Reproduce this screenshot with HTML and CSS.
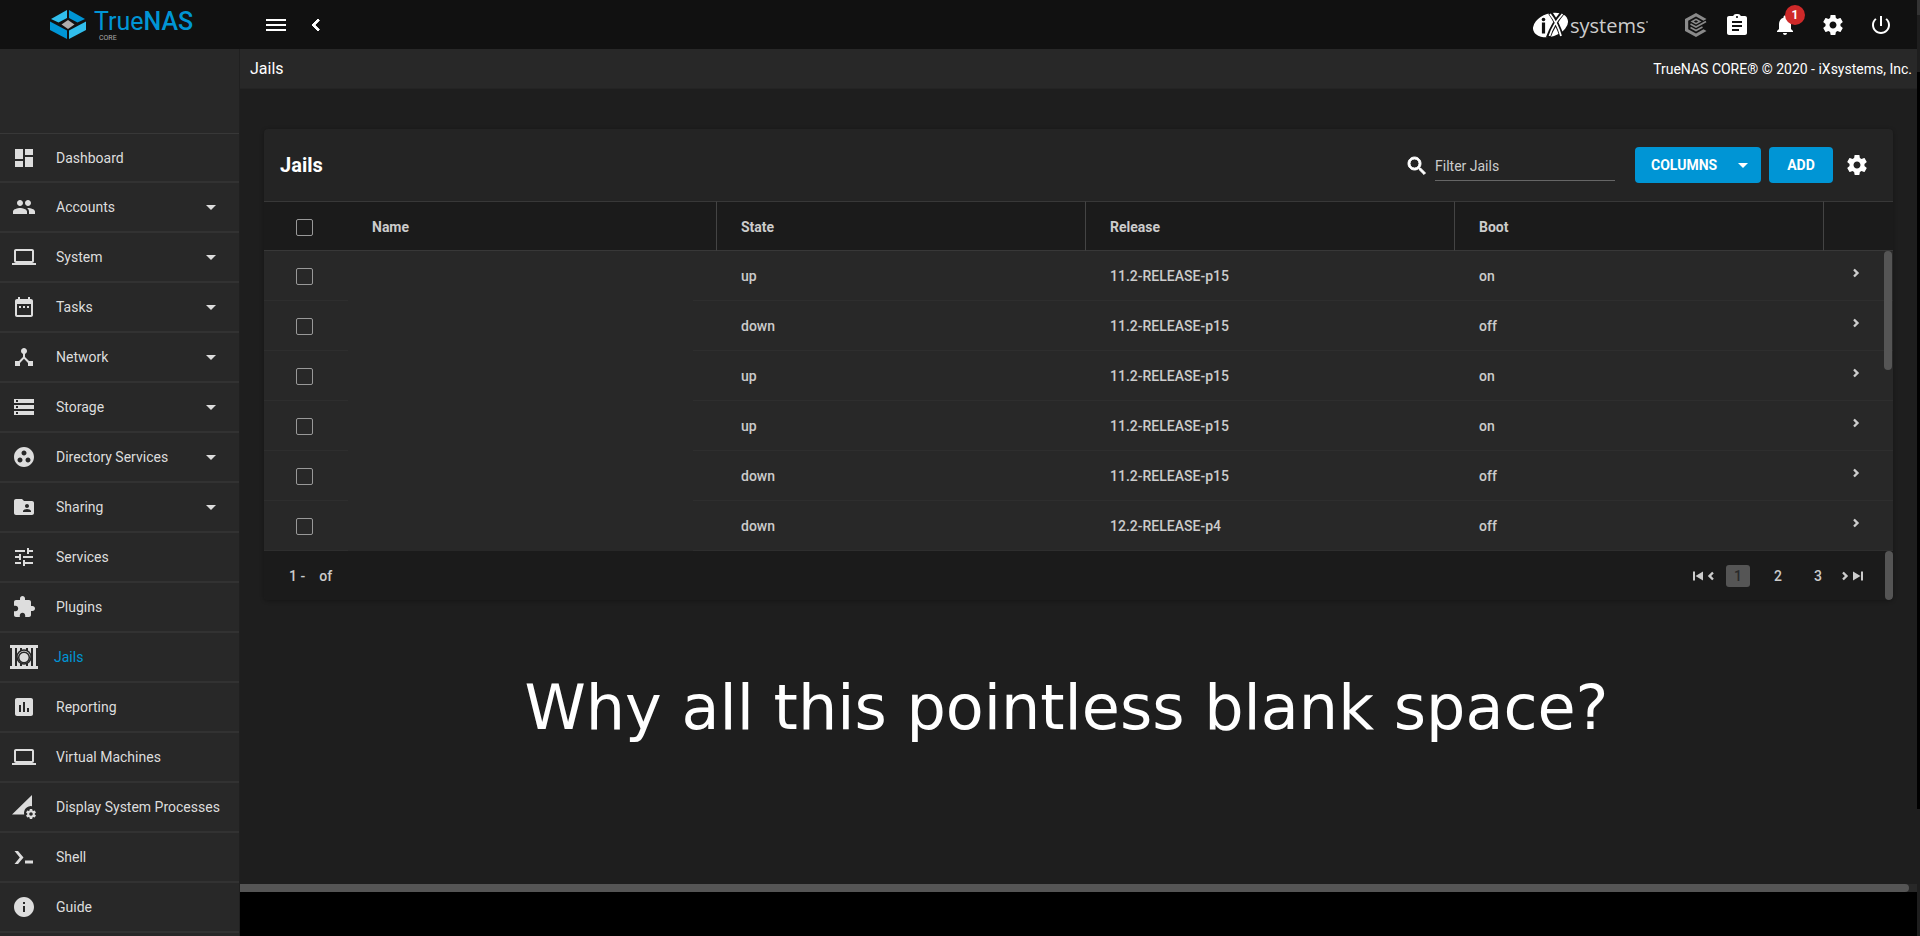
FILE: index.html
```html
<!DOCTYPE html>
<html lang="en">
<head>
    <meta charset="UTF-8">
    <meta name="viewport" content="width=device-width, initial-scale=1.0">
    <title>TrueNAS - Jails</title>
    <link rel="stylesheet" href="styles.css">
</head>
<body>
    <!-- shared icons -->
    <svg class="sprite" aria-hidden="true">
        <symbol id="gear" viewBox="0 0 24 24"><path d="M19.43 12.98c.04-.32.07-.64.07-.98s-.03-.66-.07-.98l2.11-1.65c.19-.15.24-.42.12-.64l-2-3.46c-.12-.22-.39-.3-.61-.22l-2.49 1c-.52-.4-1.08-.73-1.69-.98l-.38-2.65C14.46 2.18 14.25 2 14 2h-4c-.25 0-.46.18-.49.42l-.38 2.65c-.61.25-1.17.59-1.69.98l-2.49-1c-.23-.09-.49 0-.61.22l-2 3.46c-.13.22-.07.49.12.64l2.11 1.65c-.04.32-.07.65-.07.98s.03.66.07.98l-2.11 1.65c-.19.15-.24.42-.12.64l2 3.46c.12.22.39.3.61.22l2.49-1c.52.4 1.08.73 1.69.98l.38 2.65c.03.24.24.42.49.42h4c.25 0 .46-.18.49-.42l.38-2.65c.61-.25 1.17-.59 1.69-.98l2.49 1c.23.09.49 0 .61-.22l2-3.46c.12-.22.07-.49-.12-.64l-2.11-1.65zM12 15.5c-1.93 0-3.5-1.57-3.5-3.5s1.57-3.5 3.5-3.5 3.500 1.57 3.500 3.500-1.57 3.500-3.500 3.500z"/></symbol>
        <symbol id="laptop" viewBox="0 0 24 24"><path d="M20 18c1.1 0 1.990-.9 1.990-2L22 6c0-1.1-.9-2-2-2H4c-1.1 0-2 .9-2 2v10c0 1.1.9 2 2 2H0v2h24v-2h-4zM4 6h16v10H4V6z"/></symbol>
        <symbol id="drop" viewBox="0 0 24 24"><path d="M7 10l5 5 5-5z"/></symbol>
        <symbol id="left" viewBox="0 0 24 24"><path d="M15.410 7.410L14 6l-6 6 6 6 1.410-1.410L10.830 12z"/></symbol>
        <symbol id="right" viewBox="0 0 24 24"><path d="M10 6L8.590 7.410 13.170 12l-4.580 4.590L10 18l6-6z"/></symbol>
    </svg>

    <div class="app">
        <header class="topbar">
            <a class="brand" href="#">
                <svg class="brand-mark" viewBox="0 0 36 30">
                    <path fill="#31beec" d="M17 0v8L8.500 12.500 1 9z"/>
                    <path fill="#0095d5" d="M19 0v8l8.500 4.500L35 9z"/>
                    <path fill="#0095d5" d="M0 11.500l17 9V29L0 20z"/>
                    <path fill="#31beec" d="M36 11.500l-17 9V29l17-9z"/>
                    <path fill="#aeaeae" d="M18 10l6.500 4.500L18 19l-6.500-4.500z"/>
                </svg>
                <span class="brand-text">
                    <span class="brand-name">True<b>NAS</b></span>
                    <span class="brand-edition">CORE</span>
                </span>
            </a>
            <div class="topbar-left">
                <button class="icon-btn" aria-label="Toggle menu"><svg class="icon" viewBox="0 0 24 24"><path d="M2 18h20v-2H2v2zm0-5h20v-2H2v2zm0-7v2h20V6H2z"/></svg></button>
                <button class="icon-btn" aria-label="Collapse menu"><svg class="icon bold"><use href="#left"/></svg></button>
            </div>
            <div class="topbar-right">
                <a class="ix" href="#" aria-label="iXsystems">
                    <svg viewBox="0 0 116 28">
                        <ellipse cx="17.500" cy="14" rx="18" ry="11.500" transform="rotate(-18 17.500 14)" fill="#fff"/>
                        <path d="M17 1.500C21 7 26 17 29 26M31 0C25 7 19 16 15 27" stroke="#111" stroke-width="4.500" fill="none"/>
                        <path d="M17 3C21 8 26 18 28 25M29.500 3C25 8 19 17 16.500 25" stroke="#fff" stroke-width="1.800" fill="none"/>
                        <path d="M10.500 11.500v11" stroke="#111" stroke-width="3.200"/>
                        <circle cx="10.500" cy="8.500" r="1.800" fill="#111"/>
                        <text class="ix-text" x="37" y="22">systems</text>
                        <circle cx="114" cy="11" r="1" fill="#999"/>
                    </svg>
                </a>
                <a class="command" href="#" aria-label="TrueCommand">
                    <svg viewBox="0 0 22 24">
                        <path fill="#8a8a8a" d="M11 0l10.500 6-3 1.700L11 3.500 3.200 7.800v8.400L11 20.500l7.500-4.200 3 1.700L11 24 0 18V6z"/>
                        <path fill="#8a8a8a" d="M11 5.500l5.500 3-5.500 3-5.500-3z"/>
                        <path fill="none" stroke="#8a8a8a" stroke-width="1.600" d="M5.500 11l5.500 3 10-5.500M5.500 14.500l5.500 3 6.500-3.500"/>
                        <path fill="#111" d="M11 7.300l2.200 1.200L11 9.700 8.800 8.500z"/>
                    </svg>
                </a>
                <button class="icon-btn" aria-label="Task manager"><svg class="icon" viewBox="0 0 24 24"><path d="M20 3h-4.180C15.400 1.840 14.300 1 13 1h-2c-1.300 0-2.400.84-2.820 2H4c-1.100 0-2 .9-2 2v15c0 1.100.9 2 2 2h16c1.100 0 2-.9 2-2V5c0-1.100-.9-2-2-2zm-8 0c.55 0 1 .45 1 1s-.45 1-1 1-1-.45-1-1 .45-1 1-1zm2 15H7v-2h7v2zm3-4H7v-2h10v2zm0-4H7V8h10v2z"/></svg></button>
                <button class="icon-btn" aria-label="Notifications">
                    <svg class="icon" viewBox="0 0 24 24"><path d="M12 22c1.100 0 2-.9 2-2h-4c0 1.100.890 2 2 2zm6-6v-5c0-3.070-1.640-5.640-4.500-6.320V4c0-.83-.67-1.500-1.500-1.500s-1.500.67-1.500 1.500v.68C7.630 5.360 6 7.920 6 11v5l-2 2v1h16v-1l-2-2z"/></svg>
                    <span class="badge">1</span>
                </button>
                <button class="icon-btn" aria-label="Settings"><svg class="icon"><use href="#gear"/></svg></button>
                <button class="icon-btn" aria-label="Power"><svg class="icon" viewBox="0 0 24 24"><path d="M13 3h-2v10h2V3zm4.830 2.170l-1.420 1.420C17.990 7.860 19 9.810 19 12c0 3.870-3.130 7-7 7s-7-3.130-7-7c0-2.190 1.010-4.140 2.580-5.420L6.170 5.170C4.230 6.820 3 9.260 3 12c0 4.970 4.030 9 9 9s9-4.030 9-9c0-2.740-1.230-5.180-3.170-6.830z"/></svg></button>
            </div>
        </header>

        <nav class="sidebar">
            <ul class="menu">
                <li><a href="#"><svg class="icon" viewBox="0 0 24 24"><path d="M3 13h8V3H3v10zm0 8h8v-6H3v6zm10 0h8V11h-8v10zm0-18v6h8V3h-8z"/></svg><span>Dashboard</span></a></li>
                <li><a href="#"><svg class="icon" viewBox="0 0 24 24"><path d="M16 11c1.660 0 2.990-1.340 2.990-3S17.660 5 16 5c-1.660 0-3 1.340-3 3s1.340 3 3 3zm-8 0c1.660 0 2.990-1.340 2.990-3S9.660 5 8 5C6.340 5 5 6.340 5 8s1.340 3 3 3zm0 2c-2.330 0-7 1.170-7 3.500V19h14v-2.500c0-2.330-4.670-3.500-7-3.500zm8 0c-.29 0-.62.02-.97.05 1.160.84 1.970 1.970 1.970 3.450V19h6v-2.500c0-2.330-4.670-3.500-7-3.500z"/></svg><span>Accounts</span><svg class="icon caret"><use href="#drop"/></svg></a></li>
                <li><a href="#"><svg class="icon"><use href="#laptop"/></svg><span>System</span><svg class="icon caret"><use href="#drop"/></svg></a></li>
                <li><a href="#"><svg class="icon" viewBox="0 0 24 24"><path d="M9 11H7v2h2v-2zm4 0h-2v2h2v-2zm4 0h-2v2h2v-2zm2-7h-1V2h-2v2H8V2H6v2H5c-1.110 0-1.990.9-1.990 2L3 20c0 1.100.890 2 2 2h14c1.100 0 2-.9 2-2V6c0-1.100-.9-2-2-2zm0 16H5V9h14v11z"/></svg><span>Tasks</span><svg class="icon caret"><use href="#drop"/></svg></a></li>
                <li><a href="#"><svg class="icon" viewBox="0 0 24 24"><path d="M17 16l-4-4V8.820C14.160 8.400 15 7.300 15 6c0-1.660-1.340-3-3-3S9 4.340 9 6c0 1.300.84 2.400 2 2.820V12l-4 4H3v5h5v-3.050l4-4.200 4 4.200V21h5v-5h-4z"/></svg><span>Network</span><svg class="icon caret"><use href="#drop"/></svg></a></li>
                <li><a href="#"><svg class="icon" viewBox="0 0 24 24"><path d="M2 20h20v-4H2v4zm2-3h2v2H4v-2zM2 4v4h20V4H2zm4 3H4V5h2v2zm-4 7h20v-4H2v4zm2-3h2v2H4v-2z"/></svg><span>Storage</span><svg class="icon caret"><use href="#drop"/></svg></a></li>
                <li><a href="#"><svg class="icon" viewBox="0 0 24 24"><path d="M12 2C6.480 2 2 6.480 2 12s4.480 10 10 10 10-4.480 10-10S17.520 2 12 2zM8 17.500c-1.380 0-2.500-1.120-2.500-2.500s1.120-2.500 2.500-2.500 2.500 1.120 2.500 2.500-1.120 2.500-2.500 2.500zM9.500 8c0-1.380 1.120-2.500 2.500-2.500s2.500 1.120 2.500 2.500-1.120 2.500-2.500 2.500S9.500 9.380 9.500 8zm6.500 9.500c-1.380 0-2.500-1.120-2.500-2.500s1.120-2.500 2.500-2.500 2.500 1.120 2.500 2.500-1.120 2.500-2.500 2.500z"/></svg><span>Directory Services</span><svg class="icon caret"><use href="#drop"/></svg></a></li>
                <li><a href="#"><svg class="icon" viewBox="0 0 24 24"><path d="M20 6h-8l-2-2H4c-1.100 0-1.990.9-1.990 2L2 18c0 1.100.9 2 2 2h16c1.100 0 2-.9 2-2V8c0-1.100-.9-2-2-2zm-5 3c1.100 0 2 .9 2 2s-.9 2-2 2-2-.9-2-2 .9-2 2-2zm4 8h-8v-1c0-1.330 2.670-2 4-2s4 .67 4 2v1z"/></svg><span>Sharing</span><svg class="icon caret"><use href="#drop"/></svg></a></li>
                <li><a href="#"><svg class="icon" viewBox="0 0 24 24"><path d="M3 17v2h6v-2H3zM3 5v2h10V5H3zm10 16v-2h8v-2h-8v-2h-2v6h2zM7 9v2H3v2h4v2h2V9H7zm14 4v-2H11v2h10zm-6-4h2V7h4V5h-4V3h-2v6z"/></svg><span>Services</span></a></li>
                <li><a href="#"><svg class="icon" viewBox="0 0 24 24"><path d="M20.500 11H19V7c0-1.100-.9-2-2-2h-4V3.500C13 2.120 11.880 1 10.500 1S8 2.120 8 3.500V5H4c-1.100 0-1.990.9-1.990 2v3.800H3.500c1.490 0 2.700 1.210 2.700 2.700s-1.210 2.700-2.700 2.700H2V20c0 1.100.9 2 2 2h3.800v-1.500c0-1.490 1.210-2.700 2.700-2.700 1.490 0 2.700 1.210 2.700 2.700V22H17c1.100 0 2-.9 2-2v-4h1.500c1.380 0 2.500-1.120 2.500-2.500S21.880 11 20.500 11z"/></svg><span>Plugins</span></a></li>
                <li class="active"><a href="#">
                    <svg class="icon jail" viewBox="0 0 28 24">
                        <path d="M0 0h28v3H0zM0 21h28v3H0zM2 3h3v18H2zM7 3h3v18H7zM18 3h3v18h-3zM23 3h3v18h-3zM12 3h4v4h-4zM12 18h4v3h-4z"/>
                        <circle cx="14" cy="12" r="7" fill="#ddd" stroke="#282828" stroke-width="1.500"/>
                        <circle cx="14" cy="12.500" r="5.300" fill="#ddd" stroke="#282828" stroke-width="1.500"/>
                    </svg><span>Jails</span></a></li>
                <li><a href="#"><svg class="icon" viewBox="0 0 24 24"><path d="M19 3H5c-1.100 0-2 .9-2 2v14c0 1.100.9 2 2 2h14c1.100 0 2-.9 2-2V5c0-1.100-.9-2-2-2zM9 17H7v-7h2v7zm4 0h-2V7h2v10zm4 0h-2v-4h2v4z"/></svg><span>Reporting</span></a></li>
                <li><a href="#"><svg class="icon"><use href="#laptop"/></svg><span>Virtual Machines</span></a></li>
                <li><a href="#"><svg class="icon" viewBox="0 0 24 24"><path d="M20 0v11.200a6.800 6.800 0 0 0-7.800 8.300H0z"/><svg x="13" y="13" width="12" height="12"><use href="#gear"/></svg></svg><span>Display System Processes</span></a></li>
                <li><a href="#"><svg class="icon" viewBox="0 0 24 24"><path d="M2.500 6h3.500l5.500 6.500L6 19H2.500l5.300-6.500zM13 15.500h8v3h-8z"/></svg><span>Shell</span></a></li>
                <li><a href="#"><svg class="icon" viewBox="0 0 24 24"><path d="M12 2C6.480 2 2 6.480 2 12s4.480 10 10 10 10-4.480 10-10S17.520 2 12 2zm1 15h-2v-6h2v6zm0-8h-2V7h2v2z"/></svg><span>Guide</span></a></li>
            </ul>
        </nav>

        <main class="content">
            <div class="breadcrumb">
                <span class="crumb">Jails</span>
                <span class="copyright">TrueNAS CORE® © 2020 - iXsystems, Inc.</span>
            </div>

            <section class="card">
                <div class="card-head">
                    <h1>Jails</h1>
                    <label class="filter">
                        <svg class="icon bold" viewBox="0 0 24 24"><path d="M15.500 14h-.79l-.28-.27C15.410 12.590 16 11.110 16 9.500 16 5.910 13.090 3 9.500 3S3 5.910 3 9.500 5.910 16 9.500 16c1.610 0 3.090-.59 4.230-1.570l.27.28v.79l5 4.990L20.490 19l-4.990-5zm-6 0C7.010 14 5 11.990 5 9.500S7.010 5 9.500 5 14 7.010 14 9.500 11.990 14 9.500 14z"/></svg>
                        <input type="text" placeholder="Filter Jails" aria-label="Filter Jails">
                    </label>
                    <button class="btn btn-columns">COLUMNS <svg class="icon"><use href="#drop"/></svg></button>
                    <button class="btn btn-add">ADD</button>
                    <button class="icon-btn" aria-label="Jail settings"><svg class="icon"><use href="#gear"/></svg></button>
                </div>

                <div class="table-wrap">
                    <table class="jails">
                        <thead>
                            <tr>
                                <th class="col-check"><input type="checkbox" aria-label="Select all"></th>
                                <th>Name</th>
                                <th>State</th>
                                <th>Release</th>
                                <th>Boot</th>
                                <th class="col-more"></th>
                            </tr>
                        </thead>
                        <tbody>
                            <tr>
                                <td class="col-check"><input type="checkbox" aria-label="Select jail"></td>
                                <td class="col-name"></td><td>up</td><td>11.2-RELEASE-p15</td><td>on</td>
                                <td class="col-more"><button aria-label="Expand"><svg class="icon"><use href="#right"/></svg></button></td>
                            </tr>
                            <tr>
                                <td class="col-check"><input type="checkbox" aria-label="Select jail"></td>
                                <td class="col-name"></td><td>down</td><td>11.2-RELEASE-p15</td><td>off</td>
                                <td class="col-more"><button aria-label="Expand"><svg class="icon"><use href="#right"/></svg></button></td>
                            </tr>
                            <tr>
                                <td class="col-check"><input type="checkbox" aria-label="Select jail"></td>
                                <td class="col-name"></td><td>up</td><td>11.2-RELEASE-p15</td><td>on</td>
                                <td class="col-more"><button aria-label="Expand"><svg class="icon"><use href="#right"/></svg></button></td>
                            </tr>
                            <tr>
                                <td class="col-check"><input type="checkbox" aria-label="Select jail"></td>
                                <td class="col-name"></td><td>up</td><td>11.2-RELEASE-p15</td><td>on</td>
                                <td class="col-more"><button aria-label="Expand"><svg class="icon"><use href="#right"/></svg></button></td>
                            </tr>
                            <tr>
                                <td class="col-check"><input type="checkbox" aria-label="Select jail"></td>
                                <td class="col-name"></td><td>down</td><td>11.2-RELEASE-p15</td><td>off</td>
                                <td class="col-more"><button aria-label="Expand"><svg class="icon"><use href="#right"/></svg></button></td>
                            </tr>
                            <tr>
                                <td class="col-check"><input type="checkbox" aria-label="Select jail"></td>
                                <td class="col-name"></td><td>down</td><td>12.2-RELEASE-p4</td><td>off</td>
                                <td class="col-more"><button aria-label="Expand"><svg class="icon"><use href="#right"/></svg></button></td>
                            </tr>
                        </tbody>
                    </table>
                    <div class="table-scroll"></div>
                </div>

                <div class="card-foot">
                    <div class="range"><span>1 -</span><span>of</span></div>
                    <div class="pager">
                        <button aria-label="First page"><svg class="icon" viewBox="0 0 24 24"><path d="M2 3h4v18H2zM22 3v18L7 12z"/></svg></button>
                        <button aria-label="Previous page"><svg class="icon arrow"><use href="#left"/></svg></button>
                        <button class="page current">1</button>
                        <button class="page">2</button>
                        <button class="page">3</button>
                        <button aria-label="Next page"><svg class="icon arrow"><use href="#right"/></svg></button>
                        <button aria-label="Last page"><svg class="icon" viewBox="0 0 24 24"><path d="M18 3h4v18h-4zM2 3v18l15-9z"/></svg></button>
                    </div>
                    <div class="foot-scroll"></div>
                </div>
            </section>

            <p class="note">Why all this pointless blank space?</p>

            <div class="h-scroll"><div class="h-thumb"></div></div>
        </main>
    </div>

    <div class="edge">
        <div class="edge-top"></div>
        <div class="edge-bar"></div>
        <div class="edge-gap"></div>
        <div class="edge-end"></div>
    </div>
</body>
</html>
```
FILE: styles.css
```css
* {
    box-sizing: border-box;
}
body {
    margin: 0;
    height: 100vh;
    display: flex;
    overflow: hidden;
    background: #000;
    color: #fff;
    font-family: Roboto, sans-serif;
    font-size: 14px;
    line-height: 20px;
}
a {
    color: inherit;
    text-decoration: none;
}
button {
    border: none;
    padding: 0;
    background: none;
    color: inherit;
    font: inherit;
    cursor: pointer;
}
.sprite {
    position: absolute;
    width: 0;
    height: 0;
}
.icon {
    display: block;
    width: 24px;
    height: 24px;
    flex: none;
    fill: currentColor;
}
.bold {
    stroke: currentColor;
    stroke-width: 1;
}

/* Shell */
.app {
    flex: 1;
    min-width: 0;
    display: grid;
    grid-template-columns: 240px minmax(0, 1fr);
    grid-template-rows: 49px minmax(0, 1fr);
}
.topbar {
    grid-column: 1 / 3;
    display: flex;
    align-items: center;
    background: #111;
}
.icon-btn {
    position: relative;
    display: flex;
    align-items: center;
    justify-content: center;
}
.topbar-left {
    flex: 1;
    display: flex;
    gap: 16px;
    padding-left: 24px;
}
.topbar-right {
    display: flex;
    align-items: center;
    gap: 24px;
    padding-right: 24px;
}
.brand {
    width: 240px;
    display: flex;
    align-items: center;
    gap: 8px;
    padding-left: 50px;
}
.brand-mark {
    width: 36px;
    height: 30px;
}
.brand-text {
    display: flex;
    flex-direction: column;
}
.brand-name {
    color: #0095d5;
    font-size: 25px;
    line-height: 26px;
}
.brand-name b {
    font-weight: 500;
}
.brand-edition {
    padding-left: 5px;
    color: #aaa;
    font-size: 7px;
    line-height: 6px;
}
.ix svg {
    display: block;
    width: 116px;
    height: 28px;
}
.ix-text {
    fill: #ccc;
    font-family: "Open Sans", sans-serif;
    font-size: 20px;
    font-weight: 400;
}
.ix {
    margin-right: 12px;
}
.command {
    margin-right: -6px;
}
.command svg {
    display: block;
    width: 22px;
    height: 24px;
}
.badge {
    position: absolute;
    top: -8px;
    right: -8px;
    width: 20px;
    height: 20px;
    border-radius: 50%;
    background: #ce2929;
    font-size: 12px;
    font-weight: 700;
    text-align: center;
}

/* Sidebar */
.sidebar {
    padding-top: 84px;
    background: #282828;
    border-right: 1px solid #202020;
    color: #ddd;
    overflow: hidden;
}
.menu {
    margin: 0;
    padding: 0;
    list-style: none;
}
.menu li {
    border-bottom: 2px solid #323232;
}
.menu li:first-child {
    border-top: 1px solid #383838;
}
.menu a {
    height: 48px;
    display: flex;
    align-items: center;
    gap: 20px;
    padding: 0 16px 0 12px;
}
.menu li:first-child a {
    height: 47px;
}
.menu span {
    flex: 1;
    white-space: nowrap;
}
.menu .active a {
    gap: 16px;
    padding-left: 10px;
}
.menu .active span {
    color: #0095d5;
}
.menu .jail {
    width: 28px;
}

/* Content */
.content {
    display: flex;
    flex-direction: column;
    padding-bottom: 44px;
    background: linear-gradient(#1e1e1e, #1e1e1e) content-box;
}
.breadcrumb {
    height: 40px;
    flex: none;
    display: flex;
    align-items: center;
    justify-content: space-between;
    padding: 0 5px 0 10px;
    background: #282828;
    border-bottom: 1px solid #242424;
}
.crumb {
    font-size: 16px;
}
.card {
    position: relative;
    margin: 40px 24px 0;
    flex: none;
    border-radius: 4px;
    background: #242424;
    box-shadow: 0 1px 4px rgba(0,0,0,0.3);
    overflow: hidden;
}
.card-head {
    height: 72px;
    display: flex;
    align-items: center;
    padding: 0 24px 0 16px;
}
.card-head h1 {
    flex: 1;
    margin: 0;
    font-size: 20px;
    font-weight: 700;
}
.filter {
    display: flex;
    align-items: center;
    gap: 6px;
    padding-top: 2px;
    margin-right: 20px;
}
.filter input {
    width: 180px;
    height: 30px;
    padding: 0;
    border: none;
    border-bottom: 1px solid #666;
    background: none;
    color: #fff;
    font: inherit;
    outline: none;
}
.filter input::placeholder {
    color: #ccc;
}
.btn {
    height: 36px;
    border-radius: 4px;
    background: #0095d5;
    font-weight: 700;
    text-align: center;
}
.btn-columns {
    width: 126px;
    display: flex;
    align-items: center;
    justify-content: space-between;
    padding: 0 6px 0 16px;
    margin-right: 8px;
}
.btn-add {
    width: 64px;
    margin-right: 12px;
}

/* Table */
.table-wrap {
    position: relative;
}
.jails {
    width: 100%;
    table-layout: fixed;
    border-collapse: separate;
    border-spacing: 0;
    color: #ccc;
    font-weight: 500;
}
.jails th,
.jails td {
    height: 50px;
    padding: 0 24px;
    text-align: left;
}
.jails th {
    background: #1b1b1b;
    border-top: 1px solid #383838;
    border-bottom: 1px solid #383838;
    border-right: 1px solid #444;
    padding-top: 2px;
    font-weight: 700;
}
.jails td {
    background: #282828;
    border-bottom: 1px solid #2e2e2e;
}
.jails .col-check {
    width: 84px;
    padding: 2px 0 0 32px;
    border-right: none;
}
.jails .col-more {
    width: 69px;
    padding: 0 0 2px 25px;
    border-right: none;
}
.col-more .icon {
    width: 14px;
    height: 14px;
    stroke: currentColor;
    stroke-width: 2;
}
/* separator only shows on the last 24px of the name cell */
.jails .col-name {
    border-bottom: none;
    background: linear-gradient(#2e2e2e, #2e2e2e) right bottom / 24px 1px no-repeat #282828;
}
.jails input {
    appearance: none;
    display: block;
    width: 17px;
    height: 17px;
    margin: 0;
    border: 1px solid #999;
    border-radius: 2px;
}
.table-scroll {
    position: absolute;
    top: 50px;
    right: 1px;
    width: 8px;
    height: 119px;
    border-radius: 4px;
    background: #555;
}
.card-foot {
    position: relative;
    height: 49px;
    display: flex;
    align-items: center;
    justify-content: space-between;
    padding: 0 29px 0 25px;
    background: #1b1b1b;
    color: #ccc;
    font-weight: 500;
}
.range {
    display: flex;
    gap: 14px;
}
.pager {
    display: flex;
    align-items: center;
}
.pager .icon {
    width: 12px;
    height: 12px;
}
.pager .arrow {
    width: 14px;
    height: 14px;
    stroke: currentColor;
    stroke-width: 2;
}
.page {
    width: 24px;
    height: 22px;
    margin: 0 8px;
    border-radius: 3px;
}
.current {
    background: #555;
    color: #2a2a2a;
}
.foot-scroll {
    position: absolute;
    top: 0;
    right: 0;
    width: 8px;
    height: 49px;
    border-radius: 4px;
    background: #555;
}
.note {
    flex: 1;
    margin: 70px 48px 0 24px;
    font-family: "DejaVu Sans", sans-serif;
    font-size: 62px;
    line-height: 76px;
    text-align: center;
}
.h-scroll {
    height: 8px;
    flex: none;
    padding-right: 8px;
    background: #282828;
}
.h-thumb {
    height: 8px;
    border-radius: 0 4px 4px 0;
    background: #555;
}

/* Window edge */
.edge {
    width: 3px;
    display: flex;
    flex-direction: column;
}
.edge-top {
    height: 15px;
    background: #333;
}
.edge-bar {
    height: 57px;
    background: #1e1e1e;
}
.edge-gap {
    flex: 1;
}
.edge-end {
    height: 127px;
    background: #1e1e1e;
}
```
